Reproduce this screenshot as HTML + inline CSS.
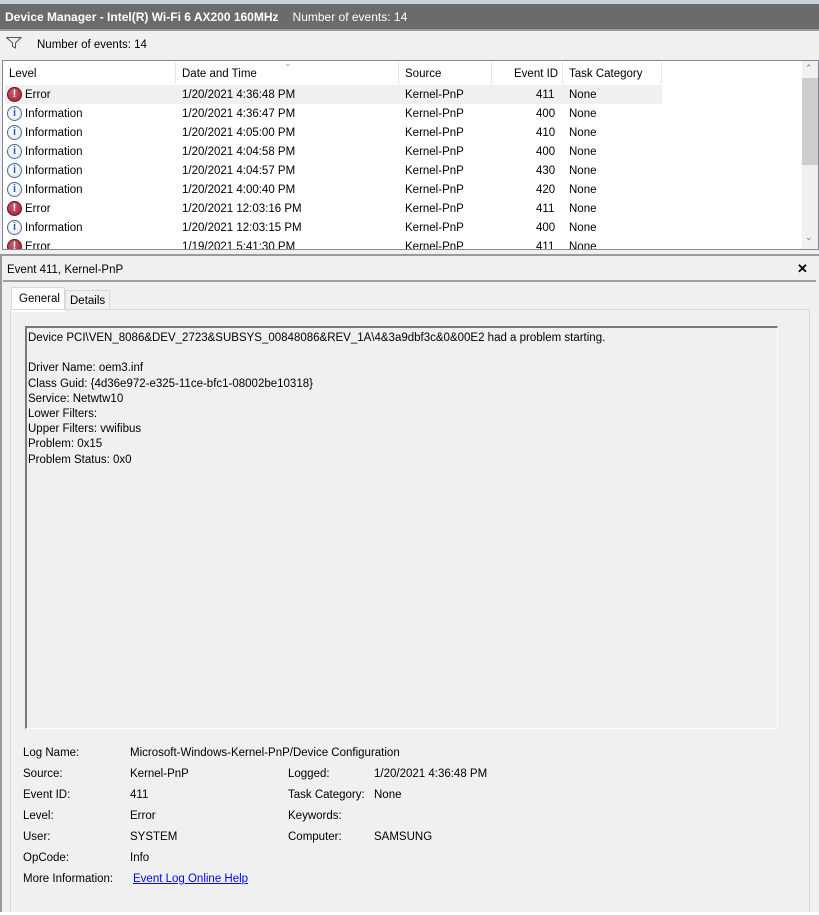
<!DOCTYPE html>
<html><head><meta charset="utf-8"><style>
*{margin:0;padding:0;box-sizing:border-box}
body{width:819px;height:915px;background:#f0f0f0;font-family:"Liberation Sans",sans-serif;font-size:11.5px;color:#000;position:relative;overflow:hidden}
.abs{position:absolute;white-space:nowrap}
.row{position:absolute;left:5px;height:19px;width:657px}
.row span{position:absolute;top:4px}
.ic{position:absolute;left:2px;top:2px;width:15px;height:15px;border-radius:50%;font-style:normal}
.err{background:radial-gradient(circle at 40% 35%,#d05868,#98203a);border:1px solid #6a1020}
.inf{background:radial-gradient(circle at 40% 35%,#fff,#dde4ee);border:1px solid #52698a}
.ic b{position:absolute;left:0;right:0;top:0;text-align:center;font-size:11px;line-height:13px;font-weight:bold;font-family:"Liberation Sans",sans-serif}
.err b{color:#fff}.inf b{color:#2b5eb4}
</style></head><body>
<div class="abs" style="left:0;top:0;width:819px;height:4px;background:#c9d1da"></div>
<div class="abs" style="left:0;top:4px;width:819px;height:25px;background:#6b6b6b;color:#fff;font-size:12px;padding:6px 0 0 5px"><b>Device Manager - Intel(R) Wi-Fi 6 AX200 160MHz</b><span style="margin-left:14px">Number of events: 14</span></div>
<div class="abs" style="left:0;top:29px;width:819px;height:2px;background:#9a9a9a"></div>
<svg class="abs" style="left:6px;top:37px" width="16" height="12"><path d="M0.5 0.5H15L9.5 6V11L6.5 9.5V6Z" fill="#eee" stroke="#555"/></svg>
<div class="abs" style="left:37px;top:39px">Number of events: 14</div>
<div class="abs" style="left:2px;top:60px;width:817px;height:190px;background:#fff;border:1px solid #828790"></div>
<div class="abs" style="left:175px;top:62px;width:1px;height:22px;background:#e5e5e5"></div>
<div class="abs" style="left:398px;top:62px;width:1px;height:22px;background:#e5e5e5"></div>
<div class="abs" style="left:491px;top:62px;width:1px;height:22px;background:#e5e5e5"></div>
<div class="abs" style="left:562px;top:62px;width:1px;height:22px;background:#e5e5e5"></div>
<div class="abs" style="left:661px;top:62px;width:1px;height:22px;background:#e5e5e5"></div>
<div class="abs" style="left:9px;top:68px">Level</div>
<div class="abs" style="left:182px;top:68px">Date and Time</div>
<div class="abs" style="left:284px;top:58px;color:#999;font-size:9px">&#8964;</div>
<div class="abs" style="left:405px;top:68px">Source</div>
<div class="abs" style="left:514px;top:68px">Event ID</div>
<div class="abs" style="left:569px;top:68px">Task Category</div>
<div class="abs" style="left:3px;top:85px;width:799px;height:164px;overflow:hidden">
<div class="row" style="top:0;left:2px;background:#f0f0f0"><i class="ic err"><b>!</b></i><span style="left:20px">Error</span><span style="left:177px">1/20/2021 4:36:48 PM</span><span style="left:400px">Kernel-PnP</span><span style="left:531px">411</span><span style="left:564px">None</span></div>
<div class="row" style="top:19px;left:2px"><i class="ic inf"><b>i</b></i><span style="left:20px">Information</span><span style="left:177px">1/20/2021 4:36:47 PM</span><span style="left:400px">Kernel-PnP</span><span style="left:531px">400</span><span style="left:564px">None</span></div>
<div class="row" style="top:38px;left:2px"><i class="ic inf"><b>i</b></i><span style="left:20px">Information</span><span style="left:177px">1/20/2021 4:05:00 PM</span><span style="left:400px">Kernel-PnP</span><span style="left:531px">410</span><span style="left:564px">None</span></div>
<div class="row" style="top:57px;left:2px"><i class="ic inf"><b>i</b></i><span style="left:20px">Information</span><span style="left:177px">1/20/2021 4:04:58 PM</span><span style="left:400px">Kernel-PnP</span><span style="left:531px">400</span><span style="left:564px">None</span></div>
<div class="row" style="top:76px;left:2px"><i class="ic inf"><b>i</b></i><span style="left:20px">Information</span><span style="left:177px">1/20/2021 4:04:57 PM</span><span style="left:400px">Kernel-PnP</span><span style="left:531px">430</span><span style="left:564px">None</span></div>
<div class="row" style="top:95px;left:2px"><i class="ic inf"><b>i</b></i><span style="left:20px">Information</span><span style="left:177px">1/20/2021 4:00:40 PM</span><span style="left:400px">Kernel-PnP</span><span style="left:531px">420</span><span style="left:564px">None</span></div>
<div class="row" style="top:114px;left:2px"><i class="ic err"><b>!</b></i><span style="left:20px">Error</span><span style="left:177px">1/20/2021 12:03:16 PM</span><span style="left:400px">Kernel-PnP</span><span style="left:531px">411</span><span style="left:564px">None</span></div>
<div class="row" style="top:133px;left:2px"><i class="ic inf"><b>i</b></i><span style="left:20px">Information</span><span style="left:177px">1/20/2021 12:03:15 PM</span><span style="left:400px">Kernel-PnP</span><span style="left:531px">400</span><span style="left:564px">None</span></div>
<div class="row" style="top:152px;left:2px"><i class="ic err"><b>!</b></i><span style="left:20px">Error</span><span style="left:177px">1/19/2021 5:41:30 PM</span><span style="left:400px">Kernel-PnP</span><span style="left:531px">411</span><span style="left:564px">None</span></div>
</div>
<div class="abs" style="left:802px;top:61px;width:16px;height:188px;background:#f0f0f0"></div>
<div class="abs" style="left:802px;top:78px;width:16px;height:87px;background:#cdcdcd"></div>
<div class="abs" style="left:805px;top:63px;color:#777;font-size:9px">&#8963;</div>
<div class="abs" style="left:805px;top:232px;color:#777;font-size:9px">&#8964;</div>
<div class="abs" style="left:0;top:254px;width:819px;height:2px;background:#9a9a9a"></div>
<div class="abs" style="left:0;top:256px;width:2px;height:659px;background:#9a9a9a"></div>
<div class="abs" style="left:7px;top:264px">Event 411, Kernel-PnP</div>
<div class="abs" style="left:797px;top:261px;font-weight:bold;font-size:13px">&#10005;</div>
<div class="abs" style="left:3px;top:280px;width:813px;height:2px;background:#a0a0a0"></div>
<div class="abs" style="left:11px;top:287px;width:54px;height:23px;background:#fff;border:1px solid #d9d9d9;border-bottom:none;padding:5px 0 0 7px">General</div>
<div class="abs" style="left:65px;top:290px;width:45px;height:20px;background:#f0f0f0;border:1px solid #d9d9d9;padding:4px 0 0 4px">Details</div>
<div class="abs" style="left:10px;top:309px;width:800px;height:604px;border:1px solid #d9d9d9;background:#f0f0f0"></div>
<div class="abs" style="left:11px;top:310px;width:54px;height:2px;background:#fff"></div>
<div class="abs" style="left:25px;top:326px;width:753px;height:403px;border:1px solid #fff;border-top:2px solid #7a7a7a;border-left:2px solid #7a7a7a;background:#f0f0f0"></div>
<div class="abs" style="left:28px;top:331px;line-height:15.2px">Device PCI\VEN_8086&amp;DEV_2723&amp;SUBSYS_00848086&amp;REV_1A\4&amp;3a9dbf3c&amp;0&amp;00E2 had a problem starting.<br><br>Driver Name: oem3.inf<br>Class Guid: {4d36e972-e325-11ce-bfc1-08002be10318}<br>Service: Netwtw10<br>Lower Filters: <br>Upper Filters: vwifibus<br>Problem: 0x15<br>Problem Status: 0x0</div>
<div class="abs" style="left:23px;top:747px">Log Name:</div>
<div class="abs" style="left:130px;top:747px">Microsoft-Windows-Kernel-PnP/Device Configuration</div>
<div class="abs" style="left:23px;top:768px">Source:</div>
<div class="abs" style="left:130px;top:768px">Kernel-PnP</div>
<div class="abs" style="left:288px;top:768px">Logged:</div>
<div class="abs" style="left:374px;top:768px">1/20/2021 4:36:48 PM</div>
<div class="abs" style="left:23px;top:789px">Event ID:</div>
<div class="abs" style="left:130px;top:789px">411</div>
<div class="abs" style="left:288px;top:789px">Task Category:</div>
<div class="abs" style="left:374px;top:789px">None</div>
<div class="abs" style="left:23px;top:810px">Level:</div>
<div class="abs" style="left:130px;top:810px">Error</div>
<div class="abs" style="left:288px;top:810px">Keywords:</div>
<div class="abs" style="left:23px;top:831px">User:</div>
<div class="abs" style="left:130px;top:831px">SYSTEM</div>
<div class="abs" style="left:288px;top:831px">Computer:</div>
<div class="abs" style="left:374px;top:831px">SAMSUNG</div>
<div class="abs" style="left:23px;top:852px">OpCode:</div>
<div class="abs" style="left:130px;top:852px">Info</div>
<div class="abs" style="left:23px;top:873px">More Information:</div>
<div class="abs" style="left:133px;top:873px;color:#0000ff;text-decoration:underline">Event Log Online Help</div>
<div class="abs" style="left:0;top:912px;width:819px;height:3px;background:#fff"></div>
</body></html>
